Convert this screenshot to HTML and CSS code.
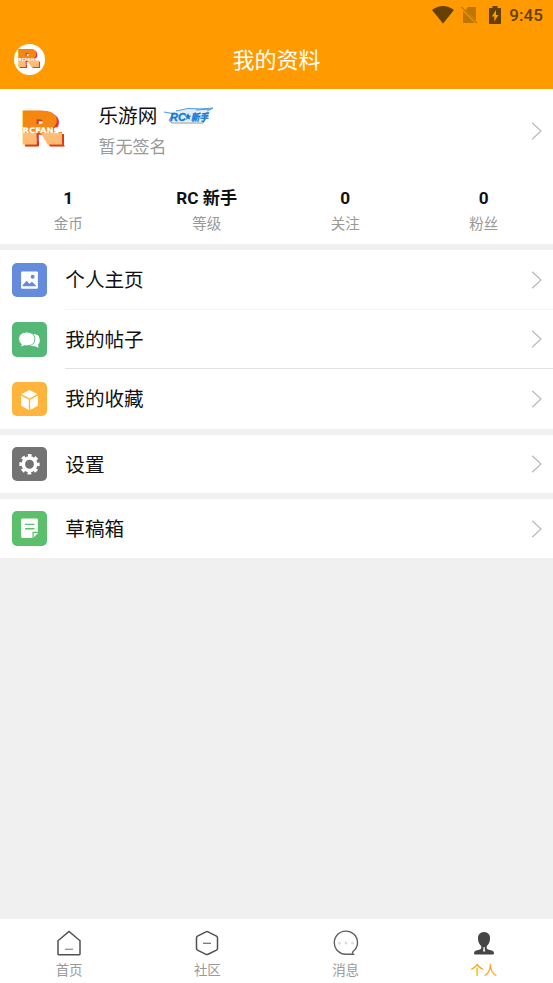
FILE: index.html
```html
<!DOCTYPE html>
<html lang="zh-CN">
<head>
<meta charset="utf-8">
<title>我的资料</title>
<link rel="stylesheet" href="styles.css">
</head>
<body>
<svg class="defs" width="0" height="0">
  <defs>
    <linearGradient id="logo-fill" gradientUnits="userSpaceOnUse" x1="0" y1="0" x2="0" y2="34">
      <stop offset="0" stop-color="#f5850b"/><stop offset=".68" stop-color="#f58a1c"/>
      <stop offset=".69" stop-color="#ffbd78"/><stop offset="1" stop-color="#ffb970"/>
    </linearGradient>
    <symbol id="logo" viewBox="0 0 44 38">
      <g class="logo-r" fill="#d93a13" stroke="#d93a13">
        <text x="0" y="34.500" textLength="41" lengthAdjust="spacingAndGlyphs">R</text>
        <rect x="4" y="31" width="13" height="5"/>
        <rect x="31" y="24" width="11" height="12"/>
      </g>
      <g class="logo-r" fill="url(#logo-fill)" stroke="url(#logo-fill)">
        <text x="-2.300" y="32.500" textLength="41" lengthAdjust="spacingAndGlyphs">R</text>
        <rect x="1" y="28" width="13.500" height="6"/>
        <rect x="29" y="22" width="11" height="12"/>
      </g>
      <text class="logo-name" x=".5" y="22.700" textLength="37" lengthAdjust="spacingAndGlyphs">RCFANS</text>
    </symbol>
    <symbol id="chevron" viewBox="0 0 12 18"><path d="M1.200 .8 10 9 1.200 17.200" fill="none" stroke="#b9b9b9" stroke-width="1.200"/></symbol>
  </defs>
</svg>
<div class="app">
  <header class="header">
    <div class="status">
      <svg width="22" height="18" viewBox="0 0 22 18"><path d="M0 4Q11-4 22 4L11 17.500Z" fill="#664000"/></svg>
      <svg class="sim" width="17" height="18" viewBox="0 0 17 18"><path d="M7 1h8v13.500L4.500 4ZM2 5l12 12H2Z" fill="#bf7600"/><path d="M.5 1 16 17" stroke="#bf7600" stroke-width="1.300"/></svg>
      <svg class="battery" width="12" height="18" viewBox="0 0 12 18"><path d="M0 2h3.500V0h5v2H12v16H0Z" fill="#664000"/><path d="M7 4 2.800 10.500h2.500V15.500L9.500 9H7Z" fill="#ff9b00"/></svg>
      <span class="clock">9:45</span>
    </div>
    <div class="titlebar">
      <div class="avatar-small"><svg width="23" height="20"><use href="#logo"/></svg></div>
      <h1>我的资料</h1>
    </div>
  </header>

  <section class="profile">
    <div class="identity">
      <svg class="avatar" width="44" height="38"><use href="#logo"/></svg>
      <div class="who">
        <div class="name">乐游网
          <svg class="badge" width="49" height="18" viewBox="0 0 49 18">
            <path d="M0 5Q12 5 19 3Q31-1 43 2L49 1Q44 8 40 15H7L5 12 9 7Z" fill="#e4eef8"/>
            <path d="M0 5 8 6.500M12 4Q24 0 36 2L49 1 43 4M32 3 47 2" fill="none" stroke="#4f9be0" stroke-width="1"/>
            <path d="M9 7 5 13.500 8 16H39L41 13 45 5" fill="none" stroke="#8494a5" stroke-width="1"/>
            <text x="6" y="14" textLength="16" lengthAdjust="spacingAndGlyphs">RC</text>
            <path d="m24 6 1.100 2.500 2.200.2-1.700 1.600.4 2.400-2-1.200-2 1.200.5-2.400-1.700-1.600 2.200-.2Z" fill="#1477d5"/>
            <text class="badge-cn" x="27" y="14" textLength="17" lengthAdjust="spacingAndGlyphs">新手</text>
          </svg>
        </div>
        <div class="signature">暂无签名</div>
      </div>
      <svg class="chevron" width="12" height="18"><use href="#chevron"/></svg>
    </div>
    <div class="stats">
      <div><b>1</b><span>金币</span></div>
      <div><b>RC 新手</b><span>等级</span></div>
      <div><b>0</b><span>关注</span></div>
      <div><b>0</b><span>粉丝</span></div>
    </div>
  </section>

  <section class="group triple">
    <div class="row">
      <svg class="tile blue" viewBox="0 0 35 35"><rect x="9" y="8.500" width="17" height="17.500" rx="1" fill="#fff"/><circle cx="20.700" cy="14" r="2" fill="#658bdc"/><path d="M10.500 23.500v-1l4-4.500 3 3 2.500-2 4 3.800v.7Z" fill="#658bdc"/></svg>
      <div class="label line">个人主页</div>
      <svg class="chevron" width="12" height="18"><use href="#chevron"/></svg>
    </div>
    <div class="row">
      <svg class="tile green" viewBox="0 0 35 35"><path d="M20 12q8 0 8 6.500 0 3-1.800 4.500l.5 3-3.700-1.500q-5 .7-7-2.500Z" fill="#fff"/><path d="M14.500 10.200q8.500.4 8.500 7 0 7-8.500 7-1 0-2-.3L8.500 25.500l.7-3q-2.700-2-2.700-5.200 0-6.600 8-7.100Z" fill="#fff" stroke="#55b877" stroke-width=".9"/></svg>
      <div class="label line strong">我的帖子</div>
      <svg class="chevron" width="12" height="18"><use href="#chevron"/></svg>
    </div>
    <div class="row">
      <svg class="tile yellow" viewBox="0 0 35 35"><path d="m17.500 8 8 4.300-8 4.500-8-4.500ZM9 13.700l7.800 4.400v10.300L9 24ZM26 13.700v10.300l-7.800 4.400V18.100Z" fill="#fff"/></svg>
      <div class="label">我的收藏</div>
      <svg class="chevron" width="12" height="18"><use href="#chevron"/></svg>
    </div>
  </section>
  <section class="group">
    <div class="row">
      <svg class="tile gray" viewBox="0 0 35 35"><g fill="none" stroke="#fff"><circle cx="17.500" cy="17.500" r="6.300" stroke-width="3.600"/><circle cx="17.500" cy="17.500" r="8.700" stroke-width="3.200" stroke-dasharray="3.700 3.133" stroke-dashoffset="1.850"/></g></svg>
      <div class="label">设置</div>
      <svg class="chevron" width="12" height="18"><use href="#chevron"/></svg>
    </div>
  </section>
  <section class="group">
    <div class="row">
      <svg class="tile lime" viewBox="0 0 35 35"><path d="M9 9q0-1.300 1.300-1.300h14.400q1.300 0 1.300 1.300v12h-5.500V27.500H10.300Q9 27.500 9 26.200Z" fill="#fff"/><path d="M21.700 27v-4.800h4.600Z" fill="#fff"/><path d="M13 13.500h9.500M13 18h9.500" stroke="#5bbf6b" stroke-width="1.300"/></svg>
      <div class="label">草稿箱</div>
      <svg class="chevron" width="12" height="18"><use href="#chevron"/></svg>
    </div>
  </section>

  <nav class="tabs">
    <div><svg width="26" height="26" viewBox="0 0 26 26" fill="none"><path d="M2 24V10.800L13 1.500l11 9.300V24q0 .7-.7.7H2.700Q2 24.700 2 24Z" stroke="#505050" stroke-width="1.500"/><path d="M9 19.300h8" stroke="#888" stroke-width="1.200"/></svg><span>首页</span></div>
    <div><svg width="26" height="26" viewBox="0 0 26 26" fill="none"><path d="M12 1.800q1-.5 2 0l8.500 4.300q1 .6 1 1.700v10.700q0 1.100-1 1.700L14 24.300q-1 .5-2 0l-8.500-4.100q-1-.6-1-1.700V7.800q0-1.100 1-1.700Z" stroke="#505050" stroke-width="1.500"/><path d="M9 13.300h8" stroke="#777" stroke-width="1.300"/></svg><span>社区</span></div>
    <div><svg width="26" height="26" viewBox="0 0 26 26" fill="none"><path d="M20 21.500Q24.500 18 24.500 12.500A11.600 11.600 0 1 0 13 24.300H20.200Q18.800 23 20 21.500Z" stroke="#606060" stroke-width="1.400"/><g fill="#ddd"><circle cx="6.500" cy="13" r="1.500"/><circle cx="13" cy="13" r="1.500"/><circle cx="19.500" cy="13" r="1.500"/></g></svg><span>消息</span></div>
    <div class="active"><svg width="26" height="26" viewBox="0 0 26 26"><path d="M13 2q6 0 6 6.500 0 4.500-3.300 7.700v1.800q0 1 1.300 1.400l4.500 1.400q1.500.7 1.500 2.700 0 1-1 1H4q-1 0-1-1 0-2 1.500-2.700L9 19.400q1.300-.4 1.300-1.400v-1.800Q7 13 7 8.500 7 2 13 2Z" fill="#454545"/><path d="M12.500 17h1.200l.6 4-1.200 1-1.200-1Z" fill="#ddd"/></svg><span>个人</span></div>
  </nav>
</div>
</body>
</html>
```
FILE: styles.css
```css
* { box-sizing: border-box; }
body { margin: 0; font-family: Roboto, "Noto Sans CJK SC", sans-serif; color: #111; }
svg { display: block; flex: none; }
.defs { position: absolute; }
.app { height: 983px; display: flex; flex-direction: column; background: #f0f0f0; overflow: hidden; }
.header { height: 88.5px; flex: none; background: #ff9b00; }
.status { height: 30px; display: flex; align-items: center; justify-content: flex-end; padding-right: 10px; }
.sim { margin-left: 7px; }
.battery { margin-left: 11px; }
.clock { margin-left: 8px; font-size: 17px; font-weight: 500; line-height: 20px; color: #664000; letter-spacing: .1px; }
.titlebar { height: 58px; display: grid; grid-template-columns: 60px 1fr 60px; align-items: center; }
.avatar-small { width: 31px; height: 31px; margin-left: 14px; border-radius: 50%; background: #fff; display: grid; place-items: center; }
h1 { margin: 0; padding-top: 3px; font-size: 22px; line-height: 32px; font-weight: 400; color: #fff; text-align: center; }
.logo-r { font: 700 42.5px "DejaVu Sans", sans-serif; stroke-width: 3; }
.logo-r rect { stroke: none; }
.logo-name { font: 700 7.5px "DejaVu Sans", sans-serif; fill: #fff; stroke: #fff; stroke-width: .2; }

.profile { height: 155.5px; flex: none; background: #fff; }
.identity { height: 84px; display: flex; align-items: center; padding: 0 10px 0 22px; }
.avatar { margin-bottom: 3px; }
.who { flex: 1; margin-left: 32.5px; padding-top: 3px; }
.name { display: flex; align-items: center; gap: 7px; font-size: 19.6px; line-height: 30px; }
.badge { margin-bottom: 3px; }
.badge text { font: italic 700 11px "Liberation Sans", sans-serif; fill: #1477d5; stroke: #1477d5; stroke-width: .3; }
.badge .badge-cn { font: italic 700 10px "Noto Sans CJK SC", sans-serif; }
.signature { font-size: 17px; line-height: 30px; color: #999; }
.stats { display: grid; grid-template-columns: repeat(4, 1fr); padding-top: 13px; margin-left: -1px; text-align: center; }
.stats b { display: block; font-size: 17.2px; line-height: 25px; }
.stats span { display: block; font-size: 14.5px; line-height: 27px; color: #999; }

.group { flex: none; margin-top: 6px; background: #fff; }
.row { height: 58.7px; display: flex; align-items: center; padding: 0 10px 0 12px; }
.triple .row { height: 59.5px; }
.tile { width: 35px; height: 34.5px; border-radius: 5px; }
.blue { background: #658bdc; }
.green { background: #55b877; }
.yellow { background: #ffb43c; }
.gray { background: #737373; }
.lime { background: #5bbf6b; }
.label { flex: 1; height: 100%; margin-left: 18.3px; font-size: 19.6px; line-height: 62px; }
.line { margin-right: -22px; padding-right: 22px; border-bottom: 1px solid #f4f4f4; }
.line.strong { border-color: #e2e2e2; }

.tabs { height: 64px; flex: none; margin-top: auto; display: grid; grid-template-columns: repeat(4, 1fr); background: #fff; padding-top: 11px; }
.tabs div { display: flex; flex-direction: column; align-items: center; }
.tabs span { font-size: 13.5px; line-height: 20px; margin-top: 4px; color: #999; }
.tabs .active span { color: #ff9b00; }
```
